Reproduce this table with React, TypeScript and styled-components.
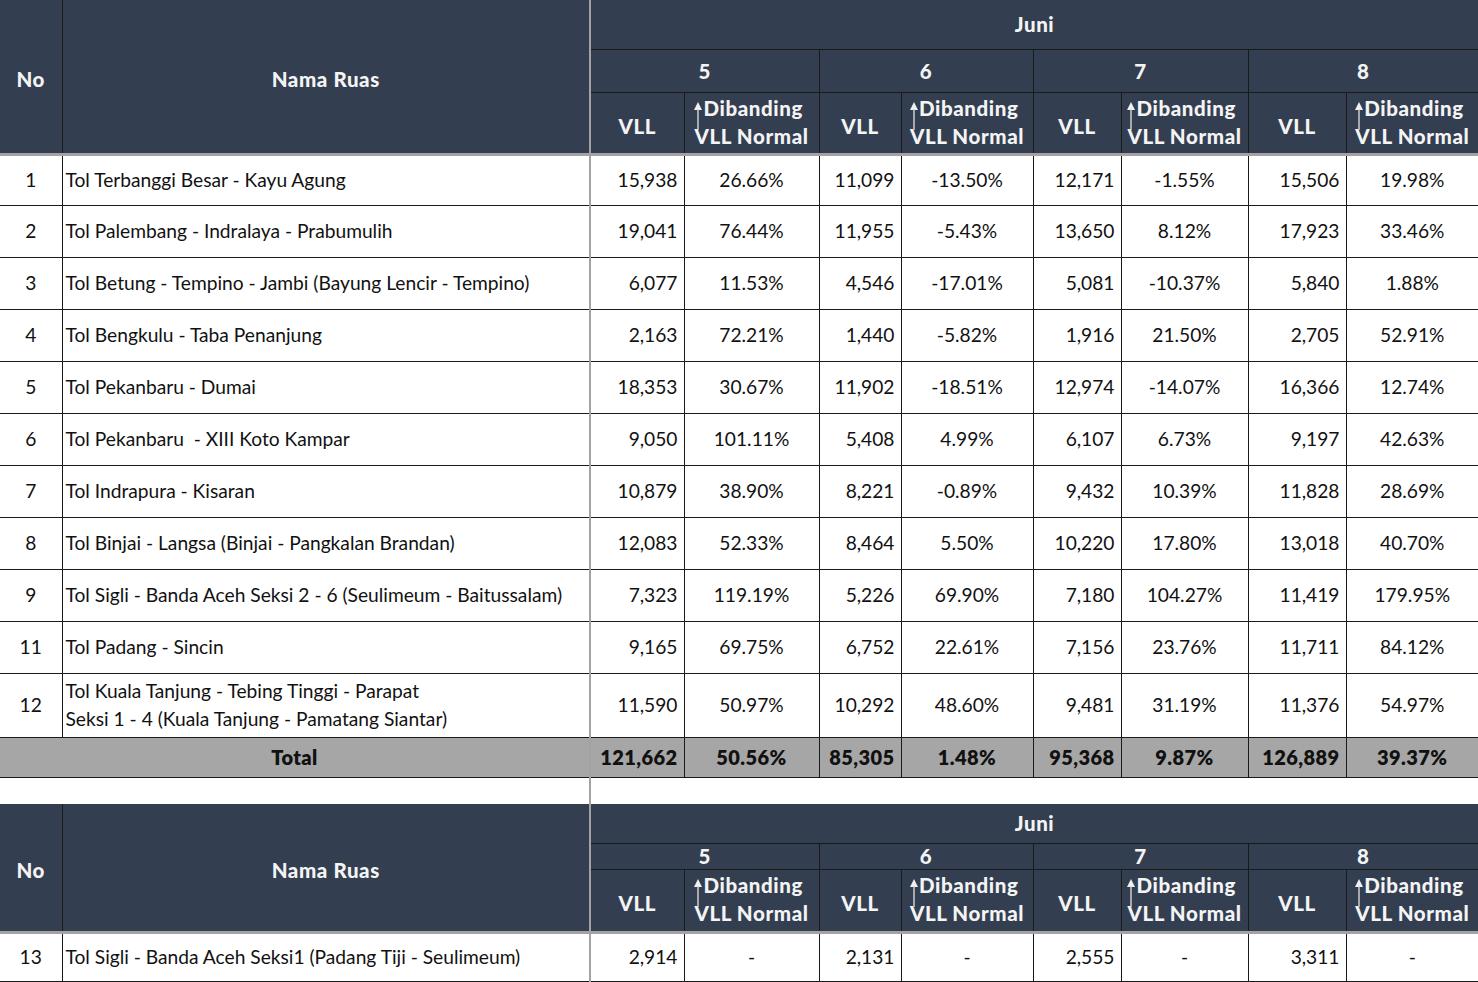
import React from "react";
import styled, { createGlobalStyle } from "styled-components";

const Global = createGlobalStyle`
  html, body { margin: 0; padding: 0; background: #ffffff; }
  * { box-sizing: border-box; }
`;

const HEAD_BG = "#333f50";
const GRID = "#1a1a1a";
const GRAY = "#a3a3a3";
const FONT = `"Lato", "Liberation Sans", sans-serif`;

const Sheet = styled.table`
  border-collapse: collapse;
  table-layout: fixed;
  width: 1478px;
  font-family: ${FONT};
  color: #111;
`;

const HeadCell = styled.th<{ $h?: number; $edge?: "left" | "right"; $sep?: boolean; $bottom?: boolean; $low?: boolean }>`
  background: ${HEAD_BG};
  color: #f4f4f4;
  font-weight: 900;
  font-size: 20.5px;
  letter-spacing: 0.6px;
  text-align: center;
  vertical-align: middle;
  padding: ${(p) => (p.$low ? "6px 0 0 0" : "0")};
  height: ${(p) => (p.$h ? `${p.$h}px` : "auto")};
  border: 1px solid ${GRID};
  border-top: none;
  ${(p) => (p.$edge === "left" ? "border-left: none;" : "")}
  ${(p) => (p.$edge === "right" ? "border-right: none;" : "")}
  ${(p) => (p.$sep ? `border-right: 2px solid ${GRAY};` : "")}
  ${(p) => (p.$bottom ? `border-bottom: 3px solid ${GRAY};` : "")}
`;

const Cell = styled.td<{ $align?: "left" | "center" | "right"; $edge?: "left" | "right"; $sep?: boolean; $h?: number; $total?: boolean }>`
  font-size: ${(p) => (p.$total ? "20px" : "19.2px")};
  letter-spacing: ${(p) => (p.$total ? "0.4px" : "0")};
  font-weight: ${(p) => (p.$total ? 800 : 400)};
  background: ${(p) => (p.$total ? "#a6a6a6" : "#ffffff")};
  text-align: ${(p) => p.$align || "center"};
  vertical-align: middle;
  padding: ${(p) => (p.$align === "right" ? "0 6px 0 0" : p.$align === "left" ? "0 0 0 3px" : "0")};
  height: ${(p) => (p.$h ? `${p.$h}px` : "52px")};
  border: 1px solid ${GRID};
  white-space: pre;
  line-height: 28px;
  ${(p) => (p.$edge === "left" ? "border-left: none;" : "")}
  ${(p) => (p.$edge === "right" ? "border-right: none;" : "")}
  ${(p) => (p.$sep ? `border-right: 2px solid ${GRAY};` : "")}
`;

const Spacer = styled.td<{ $sep?: boolean }>`
  height: 27px;
  padding: 0;
  background: #fff;
  border: none;
  ${(p) => (p.$sep ? `border-right: 2px solid ${GRAY};` : "")}
`;

const CompareLabel = styled.span`
  position: relative;
  display: inline-block;
  text-align: left;
  line-height: 28px;
  margin-top: -2px;
`;

const FirstLine = styled.span`
  display: block;
  padding-left: 9px;
`;

const SecondLine = styled.span`
  display: block;
`;

const ArrowMark = styled.svg`
  position: absolute;
  left: -1px;
  top: 7px;
  width: 10px;
  height: 30px;
`;

const columns = [62, 528, 94, 135, 82, 132, 88, 127, 98, 132];

type Row = { no: number; name: string[]; vals: string[] };

const rows: Row[] = [
  { no: 1, name: ["Tol Terbanggi Besar - Kayu Agung"], vals: ["15,938", "26.66%", "11,099", "-13.50%", "12,171", "-1.55%", "15,506", "19.98%"] },
  { no: 2, name: ["Tol Palembang - Indralaya - Prabumulih"], vals: ["19,041", "76.44%", "11,955", "-5.43%", "13,650", "8.12%", "17,923", "33.46%"] },
  { no: 3, name: ["Tol Betung - Tempino - Jambi (Bayung Lencir - Tempino)"], vals: ["6,077", "11.53%", "4,546", "-17.01%", "5,081", "-10.37%", "5,840", "1.88%"] },
  { no: 4, name: ["Tol Bengkulu - Taba Penanjung"], vals: ["2,163", "72.21%", "1,440", "-5.82%", "1,916", "21.50%", "2,705", "52.91%"] },
  { no: 5, name: ["Tol Pekanbaru - Dumai"], vals: ["18,353", "30.67%", "11,902", "-18.51%", "12,974", "-14.07%", "16,366", "12.74%"] },
  { no: 6, name: ["Tol Pekanbaru  - XIII Koto Kampar"], vals: ["9,050", "101.11%", "5,408", "4.99%", "6,107", "6.73%", "9,197", "42.63%"] },
  { no: 7, name: ["Tol Indrapura - Kisaran"], vals: ["10,879", "38.90%", "8,221", "-0.89%", "9,432", "10.39%", "11,828", "28.69%"] },
  { no: 8, name: ["Tol Binjai - Langsa (Binjai - Pangkalan Brandan)"], vals: ["12,083", "52.33%", "8,464", "5.50%", "10,220", "17.80%", "13,018", "40.70%"] },
  { no: 9, name: ["Tol Sigli - Banda Aceh Seksi 2 - 6 (Seulimeum - Baitussalam)"], vals: ["7,323", "119.19%", "5,226", "69.90%", "7,180", "104.27%", "11,419", "179.95%"] },
  { no: 11, name: ["Tol Padang - Sincin"], vals: ["9,165", "69.75%", "6,752", "22.61%", "7,156", "23.76%", "11,711", "84.12%"] },
  { no: 12, name: ["Tol Kuala Tanjung - Tebing Tinggi - Parapat", "Seksi 1 - 4 (Kuala Tanjung - Pamatang Siantar)"], vals: ["11,590", "50.97%", "10,292", "48.60%", "9,481", "31.19%", "11,376", "54.97%"] },
];

const totals = ["121,662", "50.56%", "85,305", "1.48%", "95,368", "9.87%", "126,889", "39.37%"];
const extra: Row = { no: 13, name: ["Tol Sigli - Banda Aceh Seksi1 (Padang Tiji - Seulimeum)"], vals: ["2,914", "-", "2,131", "-", "2,555", "-", "3,311", "-"] };

const days = ["5", "6", "7", "8"];

function Arrow() {
  return (
    <ArrowMark viewBox="0 0 10 30">
      <polygon points="1,9 5,1 9,9" fill="#f0f0f0" />
      <line x1="5" y1="8" x2="5" y2="29" stroke="#d8d8d8" strokeWidth="1.4" />
    </ArrowMark>
  );
}

function HeaderBlock({ h }: { h: [number, number, number] }) {
  return (
    <>
      <tr>
        <HeadCell rowSpan={3} $edge="left" $bottom $low>No</HeadCell>
        <HeadCell rowSpan={3} $sep $bottom $low>Nama Ruas</HeadCell>
        <HeadCell colSpan={8} $h={h[0]} $edge="right">Juni</HeadCell>
      </tr>
      <tr>
        {days.map((d, i) => (
          <HeadCell key={d} colSpan={2} $h={h[1]} $edge={i === 3 ? "right" : undefined}>{d}</HeadCell>
        ))}
      </tr>
      <tr>
        {days.map((d, i) => (
          <React.Fragment key={d}>
            <HeadCell $h={h[2]} $bottom $low>VLL</HeadCell>
            <HeadCell $h={h[2]} $bottom $edge={i === 3 ? "right" : undefined}>
              <CompareLabel>
                <Arrow />
                <FirstLine>Dibanding</FirstLine>
                <SecondLine>VLL Normal</SecondLine>
              </CompareLabel>
            </HeadCell>
          </React.Fragment>
        ))}
      </tr>
    </>
  );
}

function DataRow({ row, h }: { row: Row; h?: number }) {
  return (
    <tr>
      <Cell $edge="left" $h={h}>{row.no}</Cell>
      <Cell $align="left" $sep $h={h}>
        {row.name.map((n, i) => (
          <React.Fragment key={i}>
            {i > 0 && <br />}
            {n}
          </React.Fragment>
        ))}
      </Cell>
      {row.vals.map((v, i) => (
        <Cell key={i} $h={h} $align={i % 2 === 0 ? "right" : "center"} $edge={i === 7 ? "right" : undefined}>
          {v}
        </Cell>
      ))}
    </tr>
  );
}

export default function App() {
  return (
    <>
      <Global />
      <Sheet>
        <colgroup>
          {columns.map((w, i) => (
            <col key={i} style={{ width: w }} />
          ))}
        </colgroup>
        <thead>
          <HeaderBlock h={[49, 43, 62]} />
        </thead>
        <tbody>
          {rows.map((r) => (
            <DataRow key={r.no} row={r} h={r.no === 12 ? 64 : r.no === 1 ? 51 : 52} />
          ))}
          <tr>
            <Cell colSpan={2} $total $edge="left" $sep $h={40}>Total</Cell>
            {totals.map((v, i) => (
              <Cell key={i} $total $h={40} $align={i % 2 === 0 ? "right" : "center"} $edge={i === 7 ? "right" : undefined}>
                {v}
              </Cell>
            ))}
          </tr>
          <tr>
            <Spacer colSpan={2} $sep />
            <Spacer colSpan={8} />
          </tr>
        </tbody>
        <tbody>
          <HeaderBlock h={[39, 26, 63]} />
          <DataRow row={extra} h={49} />
        </tbody>
      </Sheet>
    </>
  );
}
